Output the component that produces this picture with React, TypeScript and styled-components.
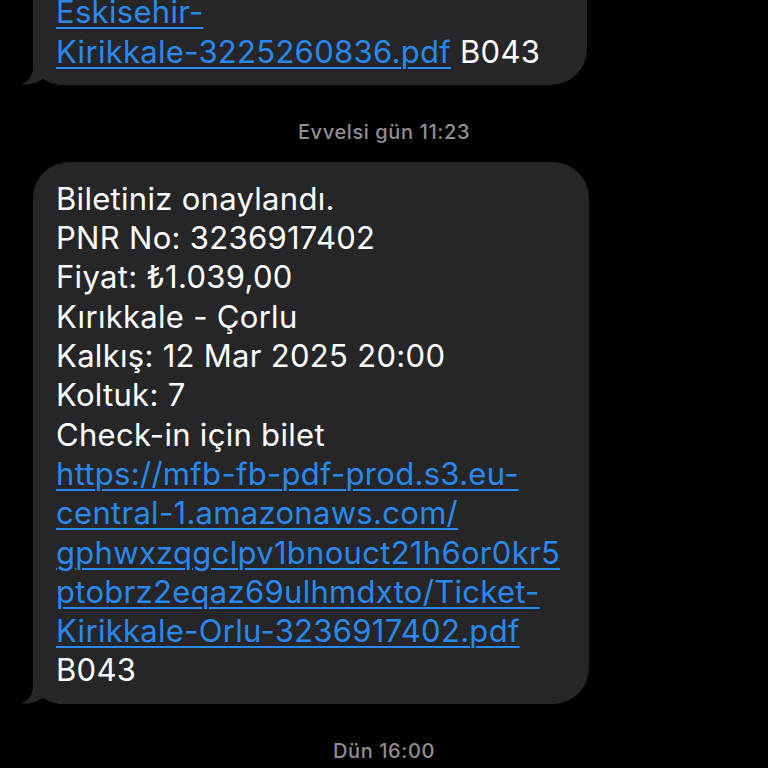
import styled, { createGlobalStyle } from "styled-components"

const GlobalStyle = createGlobalStyle`
  html, body {
    margin: 0;
    padding: 0;
    background: #000000;
    overflow: hidden;
  }
  body {
    font-family: Inter, "Noto Sans", "DejaVu Sans", sans-serif;
    -webkit-font-smoothing: antialiased;
  }
`

const Thread = styled.div`
  display: flex;
  flex-direction: column;
  align-items: flex-start;
  width: 768px;
  height: 832px;
  margin-top: -64px;
`

const Stamp = styled.div<{ $top: number; $bottom: number }>`
  align-self: stretch;
  text-align: center;
  color: #8e8e93;
  font-size: 20px;
  font-weight: 500;
  letter-spacing: 0.6px;
  line-height: 24px;
  padding: ${(p) => `${p.$top}px 0 ${p.$bottom}px`};
`

const Bubble = styled.div<{ $width: number }>`
  position: relative;
  margin-left: 33px;
  width: ${(p) => p.$width}px;
  box-sizing: border-box;
  padding: 17px 18px 14px 23px;
  background: #262628;
  border-radius: 36px;
  color: #ffffff;
  font-size: 31px;
  line-height: 39.3px;
  letter-spacing: 0.3px;
`

const Line = styled.div`
  position: relative;
  white-space: nowrap;
`

const Link = styled.span`
  color: #2889ee;
  text-decoration: underline;
  text-decoration-thickness: 2px;
  text-underline-offset: 4px;
`

const Tail = styled.svg`
  position: absolute;
  left: -12px;
  bottom: 0;
  width: 52px;
  height: 40px;
`

function BubbleTail() {
  return (
    <Tail viewBox="0 0 52 40">
      <path
        d="M12 0 L12 22 C12 31 7 36 1 39.5 C8 40.5 16 37.5 22 34 C28 37.5 34 40 42 40 L52 40 L52 0 Z"
        fill="#262628"
      />
    </Tail>
  )
}

export default function App() {
  return (
    <>
      <GlobalStyle />
      <Thread>
        <Bubble $width={554}>
          <BubbleTail />
          <Line>
            <Link>Ticket-</Link>
          </Line>
          <Line>
            <Link>Eskisehir-</Link>
          </Line>
          <Line>
            <Link>Kirikkale-3225260836.pdf</Link> B043
          </Line>
        </Bubble>
        <Stamp $top={35} $bottom={18}>Evvelsi gün 11:23</Stamp>
        <Bubble $width={556}>
          <BubbleTail />
          <Line>Biletiniz onaylandı.</Line>
          <Line>PNR No: 3236917402</Line>
          <Line>Fiyat: ₺1.039,00</Line>
          <Line>Kırıkkale - Çorlu</Line>
          <Line>Kalkış: 12 Mar 2025 20:00</Line>
          <Line>Koltuk: 7</Line>
          <Line>Check-in için bilet</Line>
          <Line>
            <Link>https://mfb-fb-pdf-prod.s3.eu-</Link>
          </Line>
          <Line>
            <Link>central-1.amazonaws.com/</Link>
          </Line>
          <Line>
            <Link>gphwxzqgclpv1bnouct21h6or0kr5</Link>
          </Line>
          <Line>
            <Link>ptobrz2eqaz69ulhmdxto/Ticket-</Link>
          </Line>
          <Line>
            <Link>Kirikkale-Orlu-3236917402.pdf</Link>
          </Line>
          <Line>B043</Line>
        </Bubble>
        <Stamp $top={35} $bottom={18}>Dün 16:00</Stamp>
      </Thread>
    </>
  )
}
